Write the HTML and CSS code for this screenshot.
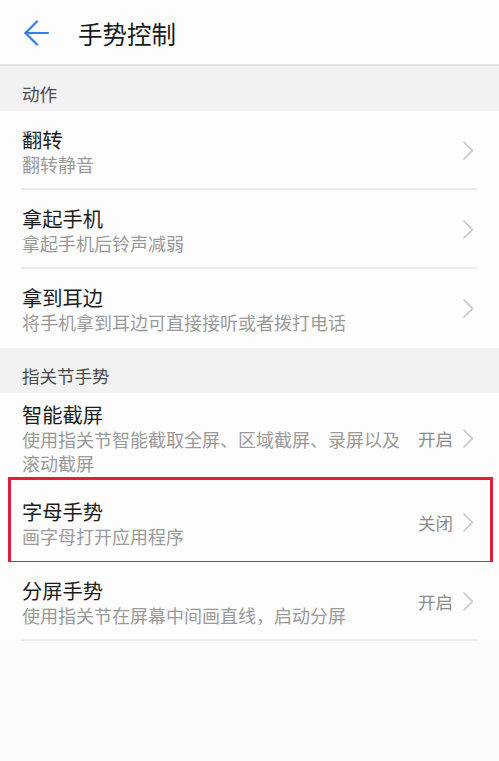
FILE: index.html
```html
<!DOCTYPE html>
<html lang="zh-CN">
<head>
<meta charset="utf-8">
<title>手势控制</title>
<link rel="stylesheet" href="styles.css">
</head>
<body>
<div class="screen">
  <header class="appbar">
    <svg class="back" width="26" height="26" viewBox="0 0 26 26" fill="none" stroke="#2f7fe6" stroke-width="2.2" stroke-linecap="round" stroke-linejoin="round">
      <path d="M24 13H1.5"/>
      <path d="M13 1.5L1.5 13L13 24.5"/>
    </svg>
    <h1 class="title">手势控制</h1>
  </header>

  <div class="section">动作</div>
  <div class="row divided">
    <div class="texts"><div class="r-title">翻转</div><div class="r-sub">翻转静音</div></div>
    <svg class="chev" width="11" height="19" viewBox="0 0 11 19"><path d="M1 1L9.5 9.5L1 18"/></svg>
  </div>
  <div class="row divided">
    <div class="texts"><div class="r-title">拿起手机</div><div class="r-sub">拿起手机后铃声减弱</div></div>
    <svg class="chev" width="11" height="19" viewBox="0 0 11 19"><path d="M1 1L9.5 9.5L1 18"/></svg>
  </div>
  <div class="row">
    <div class="texts"><div class="r-title">拿到耳边</div><div class="r-sub">将手机拿到耳边可直接接听或者拨打电话</div></div>
    <svg class="chev" width="11" height="19" viewBox="0 0 11 19"><path d="M1 1L9.5 9.5L1 18"/></svg>
  </div>

  <div class="section">指关节手势</div>
  <div class="row">
    <div class="texts"><div class="r-title">智能截屏</div><div class="r-sub">使用指关节智能截取全屏、区域截屏、录屏以及滚动截屏</div></div>
    <span class="value">开启</span>
    <svg class="chev" width="11" height="19" viewBox="0 0 11 19"><path d="M1 1L9.5 9.5L1 18"/></svg>
  </div>
  <div class="row marked">
    <div class="texts"><div class="r-title">字母手势</div><div class="r-sub">画字母打开应用程序</div></div>
    <span class="value">关闭</span>
    <svg class="chev" width="11" height="19" viewBox="0 0 11 19"><path d="M1 1L9.5 9.5L1 18"/></svg>
  </div>
  <div class="row divided">
    <div class="texts"><div class="r-title">分屏手势</div><div class="r-sub">使用指关节在屏幕中间画直线，启动分屏</div></div>
    <span class="value">开启</span>
    <svg class="chev" width="11" height="19" viewBox="0 0 11 19"><path d="M1 1L9.5 9.5L1 18"/></svg>
  </div>
</div>
</body>
</html>
```

FILE: styles.css
```css
html, body {
  margin: 0;
  padding: 0;
  background: #fcfcfc;
}
body {
  font-family: "Noto Sans CJK SC", "Noto Sans", sans-serif;
  width: 499px;
  height: 761px;
  overflow: hidden;
}
.screen {
  display: flex;
  flex-direction: column;
}
.appbar {
  height: 66px;
  box-sizing: border-box;
  display: flex;
  align-items: center;
  padding-left: 24px;
  background: #fdfdfd;
  border-bottom: 2px solid #e4e4e4;
  gap: 28px;
}
.back {
  flex: none;
  margin-top: 2px;
}
.title {
  margin: 0;
  font-size: 24.5px;
  font-weight: 400;
  color: #1a1a1a;
  line-height: 30px;
  margin-top: 3px;
}
.section {
  height: 45px;
  box-sizing: border-box;
  padding: 16px 0 0 22px;
  background: #f2f2f2;
  font-size: 17.5px;
  line-height: 24px;
  color: #4a4a4a;
}
.row {
  position: relative;
  display: flex;
  align-items: center;
  min-height: 79px;
  box-sizing: border-box;
  padding: 8px 25px 8px 22px;
  background: #fdfdfd;
}
.row.divided::before {
  content: "";
  position: absolute;
  left: 21px;
  right: 22px;
  bottom: 0;
  height: 2px;
  background: #ececec;
}
.texts {
  flex: 1;
  min-width: 0;
}
.r-title {
  font-size: 20.3px;
  line-height: 26px;
  color: #1c1c1c;
}
.r-sub {
  font-size: 18px;
  line-height: 24px;
  color: #9a9a9a;
}
.value {
  flex: none;
  font-size: 17.5px;
  color: #8c8c8c;
  margin-left: 10px;
  margin-right: 10px;
}
.chev {
  flex: none;
  fill: none;
  stroke: #c6c6c6;
  stroke-width: 1.6;
  stroke-linecap: round;
  stroke-linejoin: round;
}
.row.marked::after {
  content: "";
  position: absolute;
  left: 8px;
  right: 6px;
  top: -6px;
  bottom: -2px;
  border: 3px solid #df1f3c;
}
```
